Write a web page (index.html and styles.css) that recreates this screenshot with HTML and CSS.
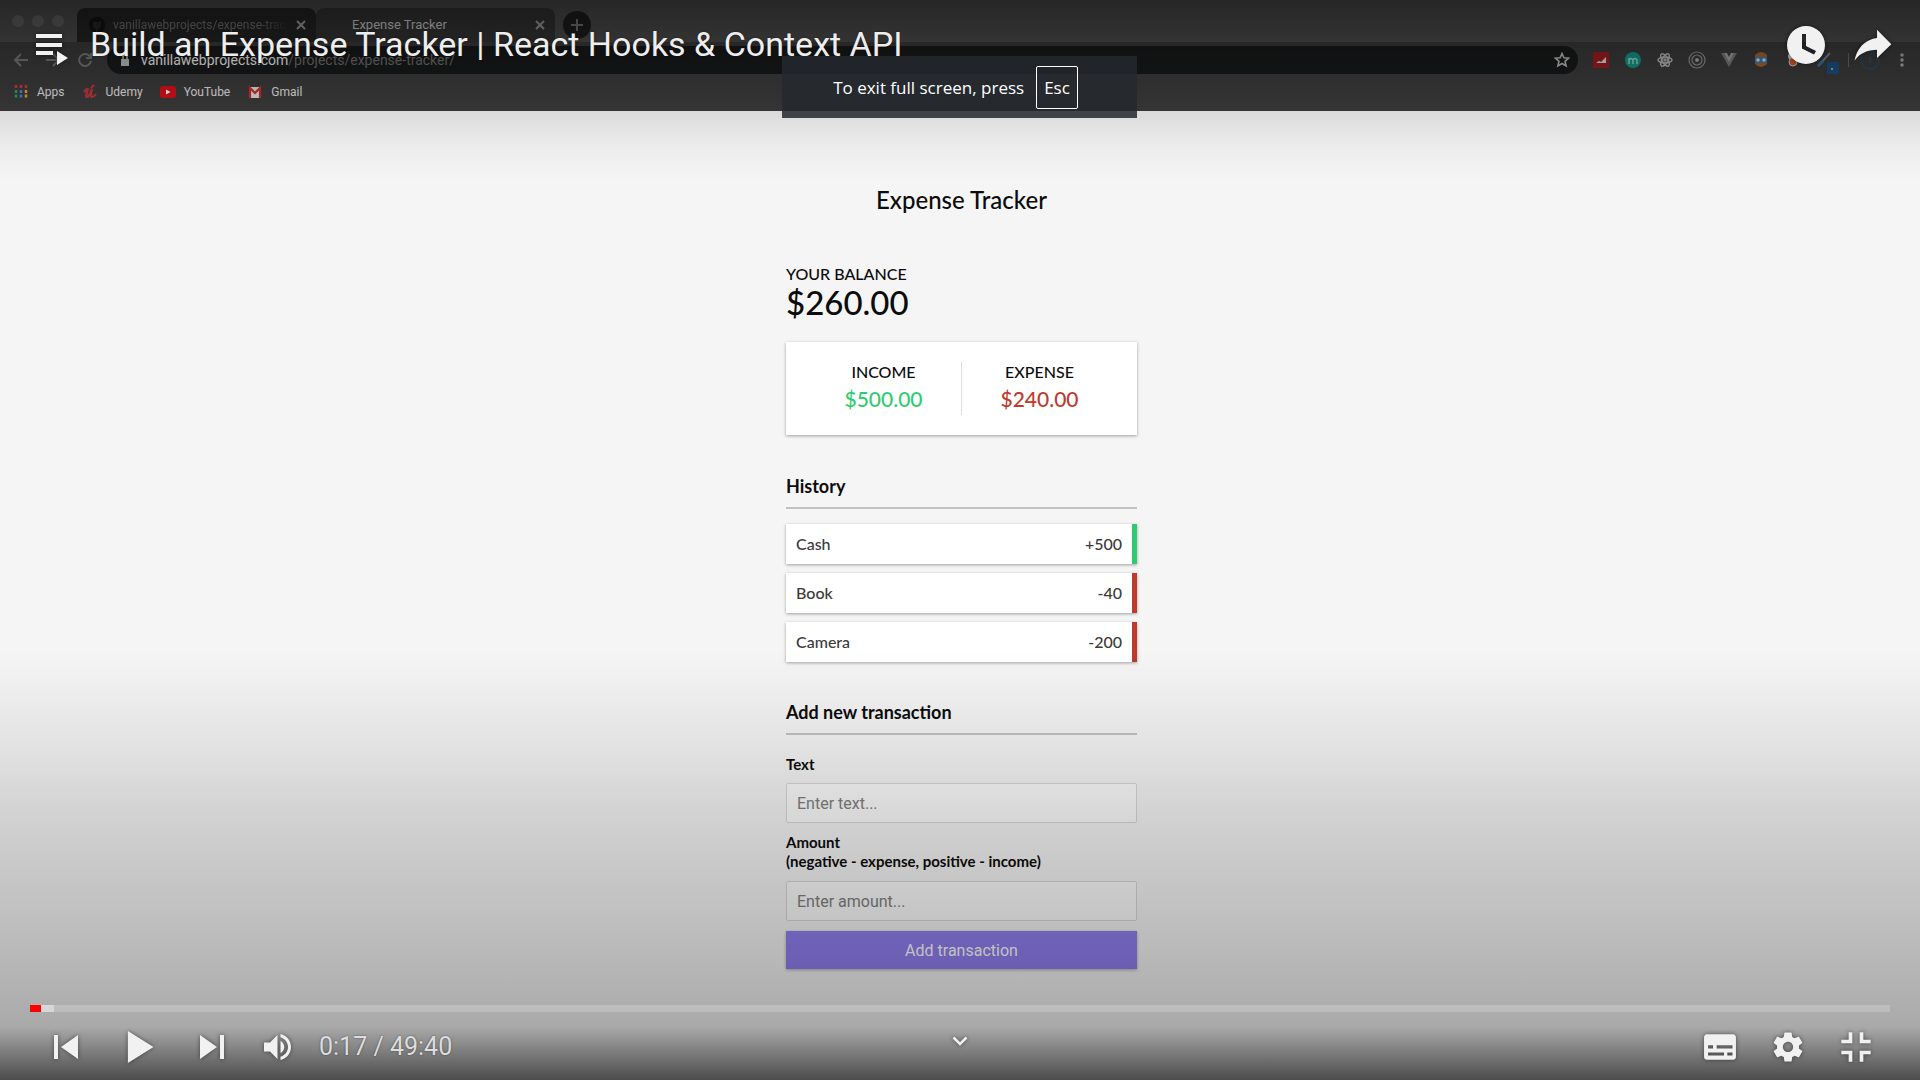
FILE: index.html
```html
<!DOCTYPE html>
<html lang="en">
<head>
<meta charset="utf-8">
<title>Build an Expense Tracker | React Hooks &amp; Context API</title>
<link rel="stylesheet" href="styles.css">
</head>
<body>
<div class="player">
  <div class="frame">
    <header class="browser">
      <div class="tabstrip">
        <div class="lights"><span class="light"></span><span class="light"></span><span class="light"></span></div>
        <div class="tab">
          <svg class="tab-icon" width="16" height="16" viewBox="0 0 16 16" aria-hidden="true"><circle cx="8" cy="8" r="8" fill="#121212"/><path d="M4 4l2 1h4l2-1v4a4 4 0 0 1-3 4v3H7v-3a4 4 0 0 1-3-4z" fill="#262626"/></svg>
          <span class="tab-title tab-title-faded">vanillawebprojects/expense-trac</span>
          <svg class="tab-close" width="10" height="10" viewBox="0 0 10 10" aria-hidden="true"><path d="M1 1l8 8M9 1L1 9"/></svg>
        </div>
        <div class="tab tab-active">
          <span class="tab-title">Expense Tracker</span>
          <svg class="tab-close" width="10" height="10" viewBox="0 0 10 10" aria-hidden="true"><path d="M1 1l8 8M9 1L1 9"/></svg>
        </div>
        <svg class="new-tab" width="28" height="28" viewBox="0 0 28 28" aria-hidden="true"><circle cx="14" cy="14" r="14" fill="#1e1e1e"/><path d="M14 8v12M8 14h12" stroke="#777" stroke-width="2"/></svg>
      </div>
      <div class="toolbar">
        <div class="nav">
          <svg width="16" height="16" viewBox="0 0 16 16" aria-hidden="true"><path d="M15 8H2M8 2L2 8l6 6"/></svg>
          <svg width="16" height="16" viewBox="0 0 16 16" aria-hidden="true"><path d="M1 8h13M8 2l6 6-6 6"/></svg>
          <svg width="16" height="16" viewBox="0 0 16 16" aria-hidden="true"><path d="M13 4.500A6 6 0 1 0 14 9M14 1v5H9"/></svg>
        </div>
        <div class="address">
          <svg width="10" height="12" viewBox="0 0 10 12" aria-hidden="true"><path d="M1 5h8v7H1z" fill="#bbb"/><path d="M3 5V3a2 2 0 0 1 4 0v2" fill="none" stroke="#bbb" stroke-width="1.500"/></svg>
          <span class="url"><span class="host">vanillawebprojects.com</span>/projects/expense-tracker/</span>
          <svg class="star" width="16" height="16" viewBox="0 0 16 16" aria-hidden="true"><path d="M8 1.500l1.900 4.300 4.700.4-3.600 3.100 1.100 4.600L8 11.500l-4.100 2.400L5 9.300 1.400 6.200l4.700-.4z" fill="none" stroke="#bbb" stroke-width="1.600"/></svg>
        </div>
        <div class="extensions">
          <svg viewBox="0 0 18 18" aria-hidden="true"><rect x="1" y="1" width="16" height="16" fill="#a01c22"/><path d="M4 12l3-2 2 1 5-5v6z" fill="#ddd"/></svg>
          <svg viewBox="0 0 18 18" aria-hidden="true"><circle cx="9" cy="9" r="8" fill="#14988a"/><path d="M5 13V7M5 9q2-3 4 0v4M9 9q2-3 4 0v4" fill="none" stroke="#9adbd3" stroke-width="1.400"/></svg>
          <svg viewBox="0 0 18 18" aria-hidden="true" fill="none" stroke="#b5b5b5" stroke-width="1.500"><ellipse cx="9" cy="9" rx="7" ry="3"/><ellipse cx="9" cy="9" rx="7" ry="3" transform="rotate(60 9 9)"/><ellipse cx="9" cy="9" rx="7" ry="3" transform="rotate(120 9 9)"/><circle cx="9" cy="9" r="1"/></svg>
          <svg viewBox="0 0 18 18" aria-hidden="true" fill="none" stroke="#909090" stroke-width="1.200"><circle cx="9" cy="9" r="8"/><circle cx="9" cy="9" r="5"/><circle cx="9" cy="9" r="1.500" fill="#bbb"/></svg>
          <svg viewBox="0 0 18 18" aria-hidden="true"><path d="M1 2h5l3 5 3-5h5L9 16z" fill="#777"/><path d="M4 2h3l2 4 2-4h3l-5 9z" fill="#a0a0a0"/></svg>
          <svg viewBox="0 0 18 18" aria-hidden="true"><path d="M3 4q6-6 12 0v9q-6 6-12 0z" fill="#a9622a"/><circle cx="6" cy="9" r="2.500" fill="#ddd" stroke="#2c7fc4" stroke-width="1.500"/><circle cx="12" cy="9" r="2.500" fill="#ddd" stroke="#2c7fc4" stroke-width="1.500"/></svg>
          <svg viewBox="0 0 18 18" aria-hidden="true"><circle cx="9" cy="5" r="5" fill="#e8e8e8"/><circle cx="9" cy="11" r="4" fill="#db5a2a" stroke="#ccc"/></svg>
          <svg viewBox="0 0 18 18" aria-hidden="true"><path d="M2 15L14 2" stroke="#6c7f94" stroke-width="2"/><path d="M2 15l5-5" stroke="#3b6ea5" stroke-width="3"/></svg>
          <svg viewBox="0 0 1 18" aria-hidden="true"><path d="M.5 2v14" stroke="#666"/></svg>
        </div>
        <svg class="badge" width="12" height="12" viewBox="0 0 12 12" aria-hidden="true"><rect width="12" height="12" fill="#1c4f80"/><circle cx="5" cy="7" r="1" fill="#ccc"/></svg>
        <svg class="avatar" width="20" height="20" viewBox="0 0 20 20" aria-hidden="true"><circle cx="10" cy="10" r="9" fill="none" stroke="#2c4a63" stroke-width="1.500"/><path d="M10 7v6" stroke="#2c4a63" stroke-width="2"/></svg>
        <svg class="kebab" width="4" height="16" viewBox="0 0 4 16" aria-hidden="true" fill="#aaa"><circle cx="2" cy="3" r="1.700"/><circle cx="2" cy="8" r="1.700"/><circle cx="2" cy="13" r="1.700"/></svg>
      </div>
      <nav class="bookmarks">
        <a class="bookmark" href="#"><svg width="16" height="16" viewBox="0 0 16 16" aria-hidden="true"><path d="M3 1v3M8 1v3M13 1v3" stroke="#d23b36" stroke-width="2.500"/><path d="M3 6v9" stroke="#2da15a" stroke-width="2.500" stroke-dasharray="3 1.500"/><path d="M8 6v9" stroke="#3f86dd" stroke-width="2.500" stroke-dasharray="3 1.500"/><path d="M13 6v9" stroke="#e2a92c" stroke-width="2.500" stroke-dasharray="3 1.500"/></svg>Apps</a>
        <a class="bookmark" href="#"><svg width="16" height="16" viewBox="0 0 16 16" aria-hidden="true"><path d="M2 8q3-4 4-3-3 8-1 8 2 0 5-8-2 8 0 8 2 0 4-3M9 4l3-3" fill="none" stroke="#c3333b" stroke-width="2.200"/></svg>Udemy</a>
        <a class="bookmark" href="#"><svg width="16" height="16" viewBox="0 0 16 16" aria-hidden="true"><rect y="2" width="16" height="12" rx="3" fill="#d8101a"/><path d="M6 5.500v5l4.500-2.500z" fill="#fff"/></svg>YouTube</a>
        <a class="bookmark" href="#"><svg width="16" height="16" viewBox="0 0 16 16" aria-hidden="true"><rect x="2" y="3" width="12" height="11" fill="#ddd"/><path d="M3 14V4l5 5 5-5v10" fill="none" stroke="#c62f2b" stroke-width="2.200"/></svg>Gmail</a>
      </nav>
    </header>

    <main class="app">
      <div class="tracker">
        <h1 class="app-title">Expense Tracker</h1>
        <h2 class="balance-label">YOUR BALANCE</h2>
        <p class="balance">$260.00</p>
        <section class="summary">
          <div class="summary-cell"><h3 class="summary-label">INCOME</h3><p class="amount amount-plus">$500.00</p></div>
          <div class="summary-cell"><h3 class="summary-label">EXPENSE</h3><p class="amount amount-minus">$240.00</p></div>
        </section>
        <h2 class="section-title">History</h2>
        <ul class="history">
          <li class="entry entry-plus"><span>Cash</span><span>+500</span></li>
          <li class="entry entry-minus"><span>Book</span><span>-40</span></li>
          <li class="entry entry-minus"><span>Camera</span><span>-200</span></li>
        </ul>
        <h2 class="section-title">Add new transaction</h2>
        <form class="form">
          <label class="label" for="text">Text</label>
          <input class="field" id="text" type="text" placeholder="Enter text...">
          <label class="label" for="amount">Amount<br>(negative - expense, positive - income)</label>
          <input class="field" id="amount" type="text" placeholder="Enter amount...">
          <button class="submit" type="button">Add transaction</button>
        </form>
      </div>
    </main>
  </div>

  <div class="scrim scrim-top"></div>
  <div class="scrim scrim-bottom"></div>

  <div class="player-top">
    <button class="icon-button queue" type="button" aria-label="Playlist"><svg width="34" height="32" viewBox="0 0 34 32"><path d="M1 1h26v4H1zM1 10h26v4H1zM1 18h17v4H1zM22 18l11 7-11 7z"/></svg></button>
    <a class="video-title" href="#">Build an Expense Tracker | React Hooks &amp; Context API</a>
    <button class="icon-button" type="button" aria-label="Watch later"><svg width="66" height="66" viewBox="0 0 66 66"><path fill-rule="evenodd" d="M32 14a19 19 0 1 0 0 38 19 19 0 1 0 0-38zM28 22h4v12l10 5-2 3.500-12-6z"/></svg></button>
    <button class="icon-button" type="button" aria-label="Share"><svg width="66" height="66" viewBox="0 0 36 36"><path d="m 20.20,14.19 0,-4.45 7.79,7.79 -7.79,7.62 0,-4.56 C 16.27,20.69 12.10,21.81 9.34,24.76 8.80,25.13 7.60,27.29 8.12,25.65 9.08,21.32 11.80,17.18 15.98,15.38 c 1.33,-0.60 2.76,-0.98 4.21,-1.19 z"/></svg></button>
  </div>

  <div class="player-bottom">
    <div class="progress"><div class="played"></div><div class="buffered"></div></div>
    <div class="controls">
      <div class="group">
        <button class="icon-button" type="button" aria-label="Previous"><svg width="73" height="66" viewBox="0 1.500 36.500 33"><path d="m 12,12 h 2 v 12 h -2 z m 3.500,6 8.500,6 V 12 z"/></svg></button>
        <button class="icon-button" type="button" aria-label="Play"><svg width="73" height="66" viewBox="-.25 1.500 36.500 33"><path d="M12.200 10v16L25 18z"/></svg></button>
        <button class="icon-button" type="button" aria-label="Next"><svg width="73" height="66" viewBox="0 1.500 36.500 33"><path d="M 12,24 20.500,18 12,12 V 24 z M 22,12 v 12 h 2 V 12 h -2 z"/></svg></button>
        <button class="icon-button" type="button" aria-label="Mute"><svg width="60" height="66" viewBox="-2 -4 40 44"><path d="M8,21 12,21 17,26 17,10 12,15 8,15zM19,14 19,22C20.480,21.320 21.500,19.770 21.500,18 21.500,16.260 20.480,14.740 19,14zM19,9.300v2.200c2.900.8 5,3.400 5,6.500s-2.100,5.700-5,6.500v2.200c4-.9 7-4.400 7-8.700s-3-7.800-7-8.700z"/></svg></button>
        <span class="time">0:17 / 49:40</span>
      </div>
      <button class="icon-button more" type="button" aria-label="More videos"><svg width="16" height="12" viewBox="0 0 16 12"><path d="M1.500 2.500L8 9l6.500-6.500" fill="none" stroke="#eee" stroke-width="2.500"/></svg></button>
      <div class="group group-end">
        <button class="icon-button" type="button" aria-label="Subtitles"><svg width="68" height="66" viewBox="0 0 36 36"><path fill-rule="evenodd" d="M11 11C9.900 11 9.300 11.800 9.300 12.700V23.300C9.300 24.200 9.900 25 11 25H25C26.100 25 26.700 24.200 26.700 23.300V12.700C26.700 11.800 26.100 11 25 11zM11.500 17H14.200V18.800H11.500zM16.200 17H24.800V18.800H16.200zM11.500 21H20.200V22.600H11.500zM22 21H24.800V22.600H22z"/></svg></button>
        <button class="icon-button" type="button" aria-label="Settings"><svg width="68" height="66" viewBox="0 0 36 36"><path d="m 23.940,18.780 c .03,-0.250 .05,-0.510 .05,-0.780 0,-0.270 -0.020,-0.520 -0.050,-0.780 l 1.680,-1.320 c .15,-0.120 .19,-0.330 .09,-0.510 l -1.600,-2.760 c -0.090,-0.170 -0.310,-0.240 -0.480,-0.170 l -1.990,.8 c -0.410,-0.320 -0.860,-0.580 -1.350,-0.780 l -0.300,-2.120 c -0.020,-0.190 -0.190,-0.330 -0.390,-0.330 l -3.200,0 c -0.200,0 -0.360,.14 -0.390,.33 l -0.300,2.120 c -0.480,.2 -0.930,.47 -1.350,.78 l -1.990,-0.800 c -0.180,-0.070 -0.390,0 -0.480,.17 l -1.600,2.760 c -0.100,.17 -0.050,.39 .09,.51 l 1.680,1.320 c -0.030,.25 -0.050,.52 -0.050,.78 0,.26 .02,.52 .05,.78 l -1.680,1.320 c -0.150,.12 -0.190,.33 -0.090,.51 l 1.600,2.760 c .09,.17 .31,.24 .48,.17 l 1.990,-0.800 c .41,.32 .86,.58 1.350,.78 l .30,2.120 c .02,.19 .19,.33 .39,.33 l 3.200,0 c .2,0 .36,-0.140 .39,-0.330 l .30,-2.120 c .48,-0.200 .93,-0.470 1.350,-0.780 l 1.990,.8 c .18,.07 .39,0 .48,-0.170 l 1.600,-2.760 c .09,-0.170 .05,-0.390 -0.090,-0.510 l -1.680,-1.320 0,0 z m -5.940,2.010 c -1.540,0 -2.800,-1.250 -2.800,-2.800 0,-1.540 1.250,-2.800 2.800,-2.800 1.540,0 2.800,1.250 2.800,2.800 0,1.540 -1.250,2.800 -2.800,2.800 l 0,0 z"/></svg></button>
        <button class="icon-button" type="button" aria-label="Exit full screen"><svg width="68" height="66" viewBox="0 0 36 36"><path d="m 14,14 -4,0 0,2 6,0 0,-6 -2,0 0,4 z M 22,14 l 0,-4 -2,0 0,6 6,0 0,-2 -4,0 z M 20,26 l 2,0 0,-4 4,0 0,-2 -6,0 0,6 z M 10,22 l 4,0 0,4 2,0 0,-6 -6,0 0,2 z"/></svg></button>
      </div>
    </div>
  </div>

  <div class="toast">To exit full screen, press <kbd class="key">Esc</kbd></div>
</div>
</body>
</html>
```

FILE: styles.css
```css
* { box-sizing: border-box; }
body, h1, h2, h3, p, ul { margin: 0; padding: 0; }
body { background: #f5f5f5; font-family: Roboto, "Liberation Sans", sans-serif; }
svg { display: block; flex: none; }
a { color: inherit; text-decoration: none; }

.player { position: relative; min-height: 100vh; overflow: hidden; }

/* browser window inside the video */
.browser { height: 111px; background: #3b3b3b; color: #e0e0e0; font: 12px/16px Roboto, "Liberation Sans", sans-serif; }
.tabstrip { display: flex; height: 42px; padding: 8px 0 0 12px; background: #4d4d4d; }
.lights { display: flex; gap: 8px; width: 65px; padding-top: 7px; }
.light { width: 12px; height: 12px; border-radius: 50%; background: #626262; }
.tab { display: flex; align-items: center; gap: 8px; width: 239px; height: 34px; padding: 0 10px 0 12px; border-radius: 8px 8px 0 0; background: #242424; }
.tab-active { background: #353535; }
.tab-title { flex: 1; white-space: nowrap; color: #d0d0d0; }
.tab-active .tab-title { padding-left: 24px; font-size: 13px; }
.tab-title-faded { color: #707070; mask-image: linear-gradient(90deg, #000 85%, transparent); }
.tab-close { fill: none; stroke: #a0a0a0; stroke-width: 2; }
.new-tab { margin: 3px 0 0 8px; }
.toolbar { position: relative; display: flex; align-items: center; height: 36px; padding: 0 16px 0 13px; }
.nav { display: flex; gap: 16px; width: 94px; fill: none; stroke: #777; stroke-width: 2; }
.address { flex: 1; display: flex; align-items: center; gap: 11px; height: 28px; padding: 0 8px 0 13px; border-radius: 14px; background: #18191a; font-size: 14px; color: #6c6c6c; }
.url { flex: 1; }
.host { color: #f0f0f0; }
.extensions { display: flex; gap: 14px; padding-left: 14px; margin-right: 12px; }
.extensions svg { width: 18px; height: 18px; }
.extensions svg:last-child { width: 1px; }
.badge { position: absolute; right: 81px; top: 20px; }
.avatar { margin-left: -1px; }
.kebab { margin-left: 20px; }
.bookmarks { display: flex; gap: 17px; padding: 6px 13px; }
.bookmark { display: flex; align-items: center; gap: 8px; }

/* expense tracker page */
.app { padding-left: 3px; color: #0c0c0c; font-family: Lato, "Open Sans", sans-serif; font-size: 16px; font-weight: 500; }
.tracker { width: 351px; margin: 0 auto; padding: 74px 0 110px; }
.app-title { font-size: 24px; line-height: 30px; font-weight: 500; text-align: center; }
.balance-label { margin-top: 49px; font-size: 16px; line-height: 20px; font-weight: 500; }
.balance { font-size: 33px; line-height: 36px; }
.summary { display: flex; margin-top: 22px; padding: 20px; background: #fff; box-shadow: 0 1px 3px rgba(0, 0, 0, .35); }
.summary-cell { flex: 1; text-align: center; }
.summary-cell + .summary-cell { border-left: 1px solid #dedede; }
.summary-label { font-size: 16px; line-height: 20px; font-weight: 500; }
.amount { font-size: 21px; line-height: 33px; }
.amount-plus { color: #2ecc71; }
.amount-minus { color: #c0392b; }
.section-title { margin-top: 38px; padding-bottom: 9px; border-bottom: 2px solid #c2c2c2; font-size: 18px; line-height: 24px; font-weight: 700; }
.history { display: grid; gap: 9px; margin-top: 15px; list-style: none; }
.entry { display: flex; justify-content: space-between; padding: 10px; border-right: 5px solid; background: #fff; box-shadow: 0 1px 3px rgba(0, 0, 0, .35); line-height: 20px; }
.summary + .section-title { margin-top: 39px; }
.entry span { color: #3a3a3a; }
.entry-plus { border-color: #2ecc71; }
.entry-minus { border-color: #c0392b; }
.form { display: flex; flex-direction: column; margin-top: 20px; }
.label { margin-bottom: 9px; font-size: 15px; line-height: 19px; font-weight: 700; }
.field { height: 40px; margin-bottom: 10px; padding: 0 10px; border: 1px solid #d8d8d8; border-radius: 2px; background: #fcfcfc; font: 16px Roboto, sans-serif; }
.field + .label { margin-bottom: 10px; }
.field::placeholder { color: #808080; opacity: 1; }
.submit { height: 38px; border: 0; background: #907ff0; color: #fff; font: 16px Roboto, sans-serif; box-shadow: 0 1px 3px rgba(0, 0, 0, .3); }

/* player chrome over the video */
.scrim { position: absolute; left: 0; right: 0; pointer-events: none; }
.scrim-top { top: 0; height: 180px; background: linear-gradient(rgba(0, 0, 0, .5), rgba(0, 0, 0, .34) 40px, rgba(0, 0, 0, .11) 111px, rgba(0, 0, 0, .04) 145px, transparent); }
.scrim-bottom { bottom: 0; height: 430px; background: linear-gradient(transparent, rgba(0, 0, 0, .07) 90px, rgba(0, 0, 0, .14) 160px, rgba(0, 0, 0, .25) 310px, rgba(0, 0, 0, .31) 377px, rgba(0, 0, 0, .69)); }
.icon-button { display: block; padding: 0; border: 0; background: none; }
.icon-button svg { fill: #f1f1f1; filter: drop-shadow(0 0 2px rgba(0, 0, 0, .5)); }
.player-top { position: absolute; top: 0; left: 0; right: 0; display: flex; align-items: center; padding: 12px 14px 0 35px; }
.queue { padding-top: 8px; }
.video-title { flex: 1; margin-left: 21px; padding-bottom: 2px; color: #eee; font-size: 34px; line-height: 44px; text-shadow: 0 0 2px rgba(0, 0, 0, .5); }
.player-bottom { position: absolute; bottom: 0; left: 0; right: 0; padding: 0 30px; }
.progress { display: flex; height: 7px; margin-bottom: 2px; background: rgba(255, 255, 255, .2); }
.played { width: 11px; background: #f00; }
.buffered { width: 13px; background: rgba(255, 255, 255, .4); }
.controls { display: grid; grid-template-columns: 1fr auto 1fr; align-items: center; }
.group { display: flex; align-items: center; }
.group-end { justify-content: flex-end; }
.time { margin-left: 10px; color: #ddd; font-size: 25px; line-height: 30px; text-shadow: 0 0 2px rgba(0, 0, 0, .5); }
.more { padding-bottom: 12px; }
.toast { position: absolute; top: 56px; left: 50%; display: flex; align-items: center; justify-content: center; gap: 12px; width: 355px; height: 62px; margin-left: -178px; padding-right: 8px; background: rgba(37, 40, 46, .85); color: #fff; font: 17px "Open Sans", "Noto Sans", sans-serif; }
.key { padding: 9px 7px; border: 1px solid #fff; border-radius: 2px; font: inherit; }
```
